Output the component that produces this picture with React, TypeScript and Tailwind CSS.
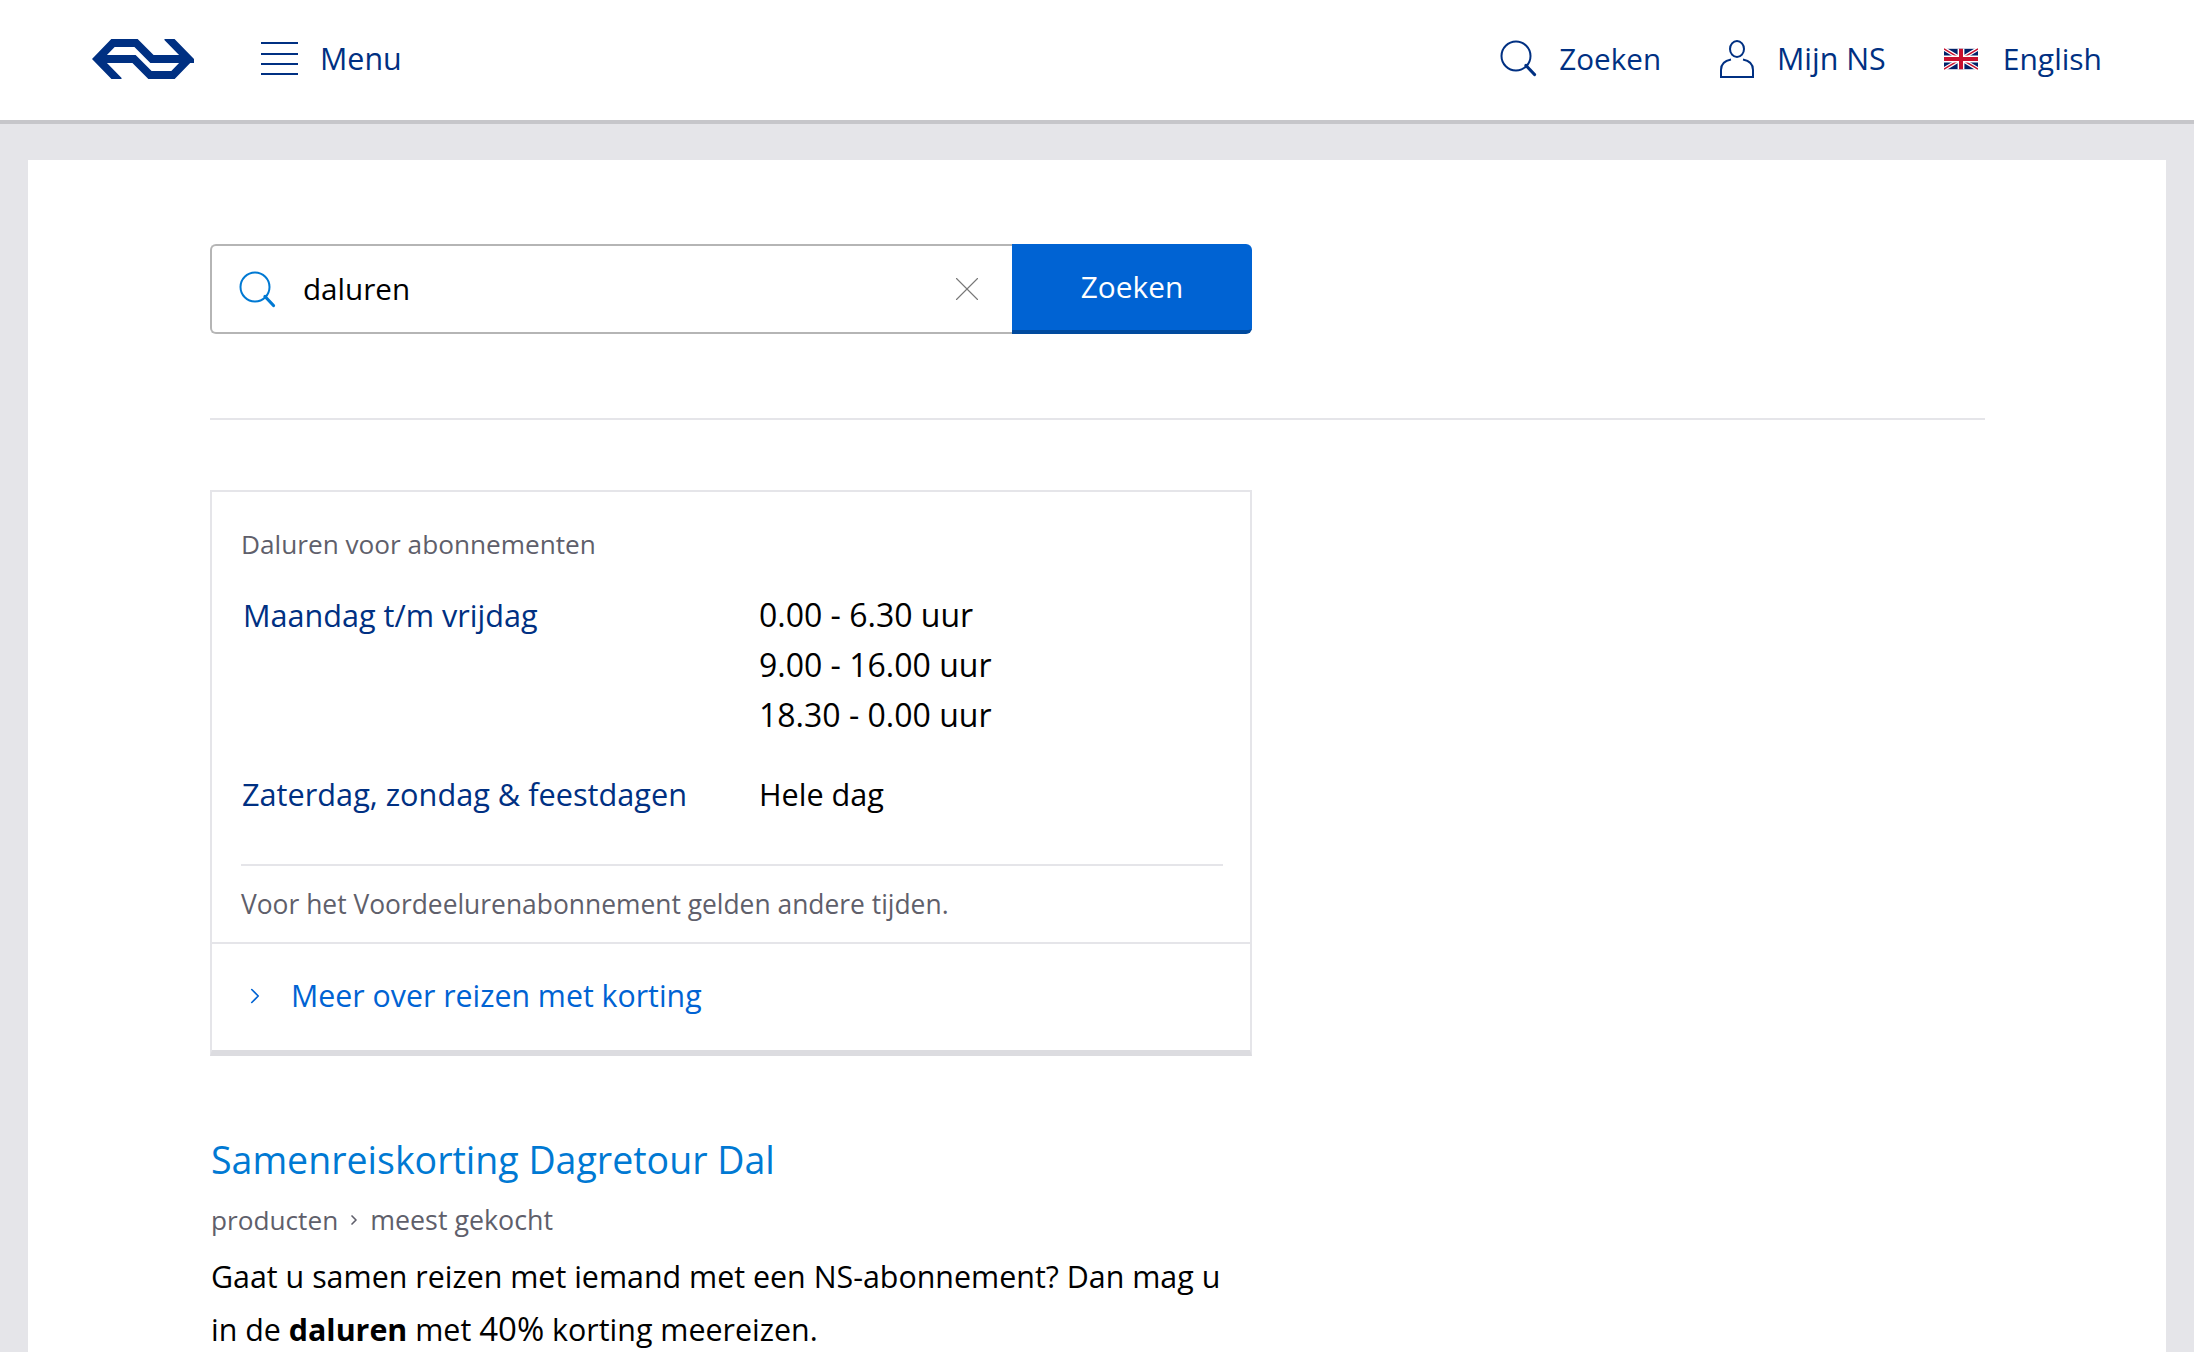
import { ChevronRight, X } from 'lucide-react'

const font = "font-['Open_Sans',sans-serif]"

function NsLogo() {
  return (
    <svg viewBox="0 0 102 40" className="h-10 w-[102px]" fill="none" stroke="#003082" strokeWidth="8">
      <path d="M27 42 L5.5 20 L21 4 H44 L60 20 H96.5 L75 -2" />
      <path d="M96.5 20 L81 36 H58 L42 20 H5.5" />
    </svg>
  )
}

function Burger() {
  return (
    <div className="flex h-[33px] w-[37px] flex-col justify-between">
      <div className="h-0.5 bg-[#003082]" />
      <div className="h-0.5 bg-[#003082]" />
      <div className="h-0.5 bg-[#003082]" />
      <div className="h-0.5 bg-[#003082]" />
    </div>
  )
}

function SearchIcon({ className }: { className: string }) {
  return (
    <svg viewBox="0 0 37 37" className={`h-[37px] w-[37px] ${className}`} fill="none" stroke="currentColor">
      <circle cx="16" cy="16" r="14.5" strokeWidth="2" />
      <path d="M26 25.5 L34.5 34.5" strokeWidth="3.2" strokeLinecap="round" />
    </svg>
  )
}

function UserIcon() {
  return (
    <svg viewBox="0 0 34 38" className="h-[38px] w-[34px]" fill="none" stroke="#003082" strokeWidth="2">
      <ellipse cx="17" cy="9" rx="7" ry="8" />
      <path d="M11 19.5 C5 20.5 1 24 1 30 V37 H33 V30 C33 24 29 20.5 23 19.5" />
    </svg>
  )
}

function Flag() {
  return (
    <svg viewBox="0 0 60 36" className="h-[22px] w-[34px]">
      <rect width="60" height="36" fill="#012169" />
      <path d="M0 0 L60 36 M60 0 L0 36" stroke="#fff" strokeWidth="7" />
      <path d="M0 0 L60 36 M60 0 L0 36" stroke="#c8102e" strokeWidth="2.5" />
      <path d="M30 0 V36 M0 18 H60" stroke="#fff" strokeWidth="12" />
      <path d="M30 0 V36 M0 18 H60" stroke="#c8102e" strokeWidth="7" />
    </svg>
  )
}

function Header() {
  return (
    <header className="flex h-[124px] items-center border-b-4 border-[#c6c6ca] bg-white pl-[92px] pr-[92px] pb-[2px] text-[30.4px] text-[#003082]">
      <NsLogo />
      <div className="ml-[67px] flex items-center gap-[22px]">
        <Burger />
        <span>Menu</span>
      </div>
      <div className="ml-auto flex items-center gap-[22px]">
        <SearchIcon className="text-[#003082]" />
        <span className="text-[29.6px]">Zoeken</span>
      </div>
      <div className="ml-[59px] flex items-center gap-[23px]">
        <UserIcon />
        <span>Mijn NS</span>
      </div>
      <div className="ml-[58px] flex items-center gap-[25px]">
        <Flag />
        <span className="pb-[2px] text-[30px]">English</span>
      </div>
    </header>
  )
}

function SearchForm() {
  return (
    <div className="flex h-[90px] w-[1042px]">
      <div className="flex flex-1 items-center rounded-l-md border-2 border-r-0 border-[#b5b5b5] pl-[27px] pr-[24px]">
        <SearchIcon className="text-[#0079d3]" />
        <span className="ml-[27px] text-[29.6px] text-black">daluren</span>
        <X size={42} strokeWidth={0.65} className="ml-auto text-[#777]" />
      </div>
      <button
        type="button"
        className="flex w-[240px] items-center justify-center rounded-r-md border-b-4 border-[#004a9e] bg-[#0063d3] text-[29.8px] text-white"
      >
        Zoeken
      </button>
    </div>
  )
}

function Card() {
  return (
    <section className="mt-[70px] w-[1042px] border-2 border-b-[6px] border-[#e5e5e9] border-b-[#dcdce0] text-[30.6px]">
      <div className="pl-[29px] pr-[27px] pt-[32px]">
        <p className="text-[26.2px] leading-[40px] text-[#5f5f6b]">Daluren voor abonnementen</p>
        <div className="mt-[26px] flex leading-[50px]">
          <div className="w-[518px] pl-[2px] text-[#003082]">Maandag t/m vrijdag</div>
          <div className="text-[32px] text-black">
            <div>0.00 - 6.30 uur</div>
            <div>9.00 - 16.00 uur</div>
            <div>18.30 - 0.00 uur</div>
          </div>
        </div>
        <div className="mt-[29px] flex leading-[50px]">
          <div className="w-[518px] pl-[1px] text-[30.7px] text-[#003082]">Zaterdag, zondag &amp; feestdagen</div>
          <div className="text-black">Hele dag</div>
        </div>
        <div className="mt-[45px] border-t-2 border-[#e5e5e9] pb-[19px] pt-[19px] text-[26.4px] leading-[38px] text-[#5f5f6b]">
          Voor het Voordeelurenabonnement gelden andere tijden.
        </div>
      </div>
      <div className="flex h-[108px] items-center border-t-2 border-[#e5e5e9] pb-[2px] pl-[30px] text-[30.3px] text-[#0063d3]">
        <ChevronRight size={26} strokeWidth={1.5} />
        <span className="ml-[23px]">Meer over reizen met korting</span>
      </div>
    </section>
  )
}

function Result() {
  return (
    <article className="mt-[76px] w-[1042px] pl-[1px]">
      <h2 className="text-[37.5px] leading-[56px] text-[#0079d3]">Samenreiskorting Dagretour Dal</h2>
      <div className="mt-[12px] flex items-center text-[26.2px] leading-[40px] text-[#5f5f6b]">
        producten
        <ChevronRight size={16} strokeWidth={2.5} className="mx-[8px]" />
        <span className="text-[26.8px]">meest gekocht</span>
      </div>
      <p className="mt-[11px] text-[30.4px] leading-[52px] text-black">
        Gaat u samen reizen met iemand met een NS-abonnement? Dan mag u in de <b>daluren</b> met{' '}
        <span className="text-[33px]">40%</span> korting meereizen.
      </p>
    </article>
  )
}

export default function App() {
  return (
    <div className={`h-[1352px] overflow-hidden bg-[#e5e5e9] ${font}`}>
      <Header />
      <main className="mx-[28px] mt-[36px] h-full bg-white px-[182px] pt-[84px]">
        <SearchForm />
        <div className="mt-[84px] h-0.5 w-[1775px] bg-[#e5e5e9]" />
        <Card />
        <Result />
      </main>
    </div>
  )
}
